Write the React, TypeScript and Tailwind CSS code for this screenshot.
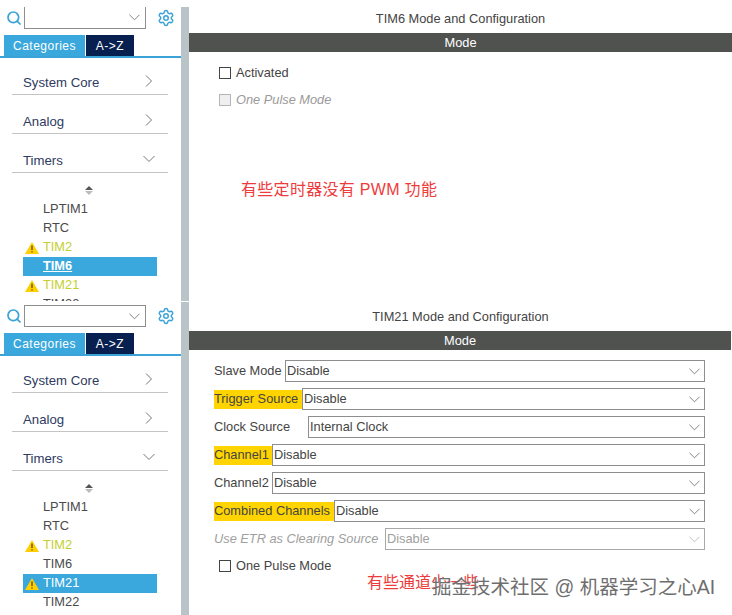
import { Search, Settings } from "lucide-react";

function Chevron({ dir, className }: { dir: "right" | "down"; className: string }) {
  return (
    <svg viewBox="0 0 12 12" className={className} fill="none" stroke="currentColor" strokeWidth="1">
      {dir === "right" ? <path d="M3 .5 8.5 6 3 11.5" /> : <path d="M.5 3 6 8.5 11.5 3" />}
    </svg>
  );
}

function Warn() {
  return (
    <svg viewBox="0 0 14 12" className="w-[14px] h-[12px] shrink-0">
      <path d="M7 0 14 12H0Z" fill="#ffcf00" />
      <path d="M7 3.5v4.5M7 9.2v1.4" stroke="#5a4a00" strokeWidth="1.3" />
    </svg>
  );
}

function Category({ name, open, first }: { name: string; open?: boolean; first?: boolean }) {
  return (
    <div
      className={`flex items-center justify-between pr-[13px] border-b border-[#c4c4c4] text-[13.2px] text-[#2e3a60] pl-[11px] ${
        first ? "h-[37px] pt-[14px]" : "h-[39px] pt-[16px]"
      }`}
    >
      <span>{name}</span>
      <Chevron dir={open ? "down" : "right"} className="w-3 h-3 mb-1 text-[#777]" />
    </div>
  );
}

type TreeRow = { name: string; warn?: boolean; selected?: boolean; strong?: boolean };

function Sidebar({ rows, cropped }: { rows: TreeRow[]; cropped?: boolean }) {
  return (
    <div className="w-[181px] shrink-0 overflow-hidden">
      <div className="flex items-center h-[22px] mt-[3px]">
        <Search className="w-[16px] h-[16px] ml-[6px] text-[#3ba3d8]" strokeWidth={2.6} />
        <div
          className={`ml-[2px] w-[122px] h-[22px] border border-[#8e8e8e] flex items-center justify-end pr-[5px] ${
            cropped ? "border-t-0" : ""
          }`}
        >
          <Chevron dir="down" className="w-[11px] h-[11px] text-[#777]" />
        </div>
        <Settings className="w-[18px] h-[18px] ml-[11px] text-[#3ba3d8]" strokeWidth={2} />
      </div>
      <div className="flex mt-[6px] pl-[4px] h-[23px] border-b-2 border-[#3ba3d8] text-[12px] tracking-[0.5px] text-white">
        <div className="w-[81px] bg-[#3aa8dc] flex items-center justify-center">Categories</div>
        <div className="w-[48px] ml-[1px] bg-[#08204f] flex items-center justify-center">{"A->Z"}</div>
      </div>
      <div className="h-[244px] mr-[3px] ml-[1px] pl-[11px] pr-[10px]">
        <Category name="System Core" first />
        <Category name="Analog" />
        <Category name="Timers" open />
        <div className="flex flex-col items-center w-[154px] mt-[13px] h-[9px] justify-between">
          <div className="w-0 h-0 border-x-[4px] border-x-transparent border-b-[4px] border-b-[#555]" />
          <div className="w-0 h-0 border-x-[4px] border-x-transparent border-t-[4px] border-t-[#bbb]" />
        </div>
        <div className="mt-[5px] ml-[11px] w-[134px]">
          {rows.map((r) => (
            <div
              key={r.name}
              className={`h-[19px] flex items-center text-[12.8px] leading-none ${
                r.selected ? "bg-[#3aa8dc] text-white" : r.warn ? "text-[#c5d02e]" : "text-[#4a4a4a]"
              }`}
            >
              <div className="w-[20px] pl-[2px] shrink-0">{r.warn && <Warn />}</div>
              <span className={r.strong ? "font-bold underline" : ""}>{r.name}</span>
            </div>
          ))}
        </div>
      </div>
    </div>
  );
}

function Title({ text, wide }: { text: string; wide?: boolean }) {
  return (
    <>
      <div className="h-[29px] flex items-end justify-center text-[12.8px] text-[#444] pb-[5px]">{text}</div>
      <div
        className={`h-[19px] bg-[#505250] text-white text-[12.8px] flex items-center justify-center ${
          wide ? "" : "mr-[1px]"
        }`}
      >
        Mode
      </div>
    </>
  );
}

function Check({ label, muted }: { label: string; muted?: boolean }) {
  return (
    <div className={`flex items-center h-[14px] text-[12.8px] ${muted ? "italic text-[#9a9a9a]" : "text-[#444]"}`}>
      <div className={`w-[12px] h-[12px] border mr-[5px] ${muted ? "border-[#b5b5b5] bg-[#efefef]" : "border-[#444]"}`} />
      {label}
    </div>
  );
}

function FormRow({
  label,
  value,
  labelClass,
  mark,
  muted,
}: {
  label: string;
  value: string;
  labelClass: string;
  mark?: boolean;
  muted?: boolean;
}) {
  return (
    <div className="flex items-center h-[22px] mb-[6px] text-[12.8px]">
      <div
        className={`${labelClass} shrink-0 h-[19px] flex items-center whitespace-nowrap ${mark ? "bg-[#ffd400]" : ""} ${
          muted ? "italic text-[#a0a0a0]" : "text-[#444]"
        }`}
      >
        {label}
      </div>
      <div
        className={`flex-1 h-[22px] border flex items-center justify-between pl-[1px] pr-[4px] ${
          muted ? "border-[#a8a8a8] text-[#a0a0a0]" : "border-[#8e8e8e] text-[#444]"
        }`}
      >
        {value}
        <Chevron dir="down" className={`w-[11px] h-[11px] ${muted ? "text-[#bbb]" : "text-[#777]"}`} />
      </div>
    </div>
  );
}

export default function App() {
  return (
    <div className="relative w-[732px] h-[615px] overflow-hidden bg-white font-['Liberation_Sans','Noto_Sans_CJK_SC',sans-serif]">
      {/* TIM6 shot */}
      <div className="h-[301px] pt-[4px] flex overflow-hidden">
        <Sidebar
          cropped
          rows={[
            { name: "LPTIM1" },
            { name: "RTC" },
            { name: "TIM2", warn: true },
            { name: "TIM6", selected: true, strong: true },
            { name: "TIM21", warn: true },
            { name: "TIM22" },
          ]}
        />
        <div className="w-[8px] shrink-0 mt-[3px] bg-[#b9c4c8]" />
        <div className="flex-1">
          <Title text="TIM6 Mode and Configuration" wide />
          <div className="pl-[30px] pt-[14px] flex flex-col gap-[13px]">
            <Check label="Activated" />
            <Check label="One Pulse Mode" muted />
          </div>
        </div>
      </div>
      {/* TIM21 shot */}
      <div className="h-[313px] mt-[1px] flex overflow-hidden">
        <Sidebar
          rows={[
            { name: "LPTIM1" },
            { name: "RTC" },
            { name: "TIM2", warn: true },
            { name: "TIM6" },
            { name: "TIM21", warn: true, selected: true },
            { name: "TIM22" },
          ]}
        />
        <div className="w-[8px] shrink-0 bg-[#b9c4c8]" />
        <div className="flex-1">
          <Title text="TIM21 Mode and Configuration" />
          <div className="pl-[25px] pr-[27px] pt-[10px]">
            <FormRow label="Slave Mode" value="Disable" labelClass="w-[71px]" />
            <FormRow label="Trigger Source" value="Disable" labelClass="w-[88px]" mark />
            <FormRow label="Clock Source" value="Internal Clock" labelClass="w-[94px]" />
            <FormRow label="Channel1" value="Disable" labelClass="w-[58px]" mark />
            <FormRow label="Channel2" value="Disable" labelClass="w-[58px]" />
            <FormRow label="Combined Channels" value="Disable" labelClass="w-[120px]" mark />
            <FormRow label="Use ETR as Clearing Source" value="Disable" labelClass="w-[171px]" muted />
            <div className="pl-[5px] pt-[3px]">
              <Check label="One Pulse Mode" />
            </div>
          </div>
        </div>
      </div>
      {/* annotations pasted over the shots */}
      <div className="absolute left-[241px] top-[180px] text-[16px] leading-[20px] tracking-[0.3px] text-[#ee3b3b]">有些定时器没有 PWM 功能</div>
      <div className="absolute left-[367px] top-[573px] text-[16px] leading-[20px] text-[#ee3b3b]">有些通道少一些</div>
      <div className="absolute left-[432px] top-[575px] text-[19.5px] leading-[24px] text-[#6e6e6e] [text-shadow:1px_1px_1px_#ffffff]">
        掘金技术社区 @ 机器学习之心AI
      </div>
    </div>
  );
}
